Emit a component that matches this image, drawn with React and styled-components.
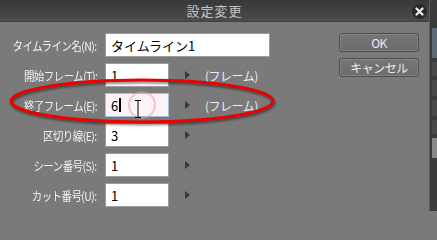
import React from "react";
import styled, { createGlobalStyle } from "styled-components";

const Global = createGlobalStyle`
  html, body { margin: 0; padding: 0; background: #7a7a7a; overflow: hidden; }
  body { font-family: "Noto Sans CJK JP", "Noto Sans", sans-serif; }
`;

const Screen = styled.div`
  position: relative;
  width: 437px;
  height: 211px;
  display: flex;
  overflow: hidden;
`;

const Dialog = styled.div`
  width: 430px;
  height: 211px;
  display: flex;
  flex-direction: column;
  background: #7a7a7a;
  border-right: 1px solid #5e5e5e;
  box-sizing: border-box;
`;

const TitleBar = styled.div`
  position: relative;
  height: 22px;
  flex: none;
  display: flex;
  align-items: center;
  justify-content: center;
  background: linear-gradient(#383838, #4c4c4c);
  border-bottom: 1px solid #404040;
  box-sizing: border-box;
`;

const Title = styled.span`
  color: #c4c4c4;
  font-size: 13px;
  letter-spacing: 1px;
  line-height: 1;
`;

const CloseBtn = styled.div`
  position: absolute;
  right: 2px;
  top: 4px;
  width: 15px;
  height: 15px;
  border-radius: 50%;
  background: #2a2a2a;
  display: flex;
  align-items: center;
  justify-content: center;
`;

const Body = styled.div`
  flex: 1;
  display: flex;
  padding: 11px 10px 0 0;
`;

const Form = styled.div`
  display: flex;
  flex-direction: column;
  gap: 6px;
  width: 340px;
`;

const Row = styled.div`
  display: flex;
  align-items: center;
  height: 24px;
`;

const LabelCell = styled.div`
  width: 97px;
  margin-right: 8px;
  display: flex;
  justify-content: flex-end;
`;

const Label = styled.label`
  display: inline-block;
  color: #f2f2f2;
  font-size: 12px;
  letter-spacing: -0.6px;
  white-space: nowrap;
  transform: scaleX(0.87);
  transform-origin: right center;
`;

const Input = styled.div`
  position: relative;
  width: ${(p) => (p.$wide ? 165 : 64)}px;
  height: 24px;
  box-sizing: border-box;
  background: ${(p) => (p.$focus ? "#fbf3f5" : "#ffffff")};
  border: 1px solid ${(p) => (p.$focus ? "#9fc3de" : "#9c9c9c")};
  display: flex;
  align-items: center;
  padding-left: 5px;
  font-size: 13px;
  color: #000;
`;

const Caret = styled.span`
  display: inline-block;
  width: 2px;
  height: 14px;
  background: #000;
  margin-left: 1px;
`;

const Arrow = styled.span`
  width: 0;
  height: 0;
  border-top: 4px solid transparent;
  border-bottom: 4px solid transparent;
  border-left: 5px solid #3a3a3a;
  margin-left: 16px;
`;

const Unit = styled.span`
  color: #efefef;
  font-size: 12px;
  margin-left: 15px;
  letter-spacing: -0.5px;
`;

const Buttons = styled.div`
  display: flex;
  flex-direction: column;
  gap: 6px;
`;

const Button = styled.div`
  width: 80px;
  height: 19px;
  box-sizing: border-box;
  border: 1px solid #4e4e4e;
  border-radius: 3px;
  background: linear-gradient(#767676, #6c6c6c);
  box-shadow: inset 0 0 0 1px #858585;
  color: #ececec;
  font-size: 12px;
  display: flex;
  align-items: center;
  justify-content: center;
  letter-spacing: -0.5px;
`;

const SideStrip = styled.div`
  flex: 1;
  background: #3b3b3b;
  display: flex;
  flex-direction: column;
  gap: 4px;
  padding-top: 28px;
`;

const StripBit = styled.div`
  height: ${(p) => p.$h}px;
  background: ${(p) => p.$c};
  margin-left: 2px;
`;

const Overlay = styled.svg`
  position: absolute;
  left: 0;
  top: 0;
  pointer-events: none;
`;

const rows = [
  { label: "タイムライン名(N):", value: "タイムライン1", wide: true },
  { label: "開始フレーム(T):", value: "1", arrow: true, unit: "(フレーム)" },
  { label: "終了フレーム(E):", value: "6", arrow: true, unit: "(フレーム)", focus: true },
  { label: "区切り線(E):", value: "3", arrow: true },
  { label: "シーン番号(S):", value: "1", arrow: true },
  { label: "カット番号(U):", value: "1", arrow: true },
];

export default function App() {
  return (
    <>
      <Global />
      <Screen>
        <Dialog>
          <TitleBar>
            <Title>設定変更</Title>
            <CloseBtn>
              <svg width="9" height="9" viewBox="0 0 9 9">
                <path d="M1.5 1.5 L7.5 7.5 M7.5 1.5 L1.5 7.5" stroke="#f0f0f0" strokeWidth="2.2" strokeLinecap="round" />
              </svg>
            </CloseBtn>
          </TitleBar>
          <Body>
            <Form>
              {rows.map((r) => (
                <Row key={r.label}>
                  <LabelCell>
                    <Label>{r.label}</Label>
                  </LabelCell>
                  <Input $wide={r.wide} $focus={r.focus}>
                    {r.value}
                    {r.focus && <Caret />}
                  </Input>
                  {r.arrow && <Arrow />}
                  {r.unit && <Unit>{r.unit}</Unit>}
                </Row>
              ))}
            </Form>
            <Buttons>
              <Button>OK</Button>
              <Button>キャンセル</Button>
            </Buttons>
          </Body>
        </Dialog>
        <SideStrip>
          <StripBit $h={30} $c="#5e6b76" />
          <StripBit $h={14} $c="#4a4a4a" />
          <StripBit $h={16} $c="#4a4a4a" />
          <StripBit $h={16} $c="#4a4a4a" />
          <StripBit $h={14} $c="#4a4a4a" />
          <StripBit $h={20} $c="#8a8a8a" />
        </SideStrip>
        <Overlay width="437" height="211" viewBox="0 0 437 211">
          <defs>
            <filter id="sh" x="-10%" y="-30%" width="120%" height="160%">
              <feGaussianBlur stdDeviation="1.2" />
            </filter>
          </defs>
          <circle cx="142" cy="105" r="13" fill="none" stroke="#e89a9a" strokeOpacity="0.5" strokeWidth="2" />
          <path d="M138 101 L138 117 M135 100.5 L141 100.5 M135 117.5 L141 117.5" stroke="#000" strokeWidth="1" fill="none" />
          <ellipse cx="143" cy="103" rx="131" ry="21" fill="none" stroke="#000" strokeOpacity="0.45" strokeWidth="3" filter="url(#sh)" />
          <ellipse cx="142" cy="101" rx="131" ry="21" fill="none" stroke="#ee0000" strokeWidth="3" />
        </Overlay>
      </Screen>
    </>
  );
}
